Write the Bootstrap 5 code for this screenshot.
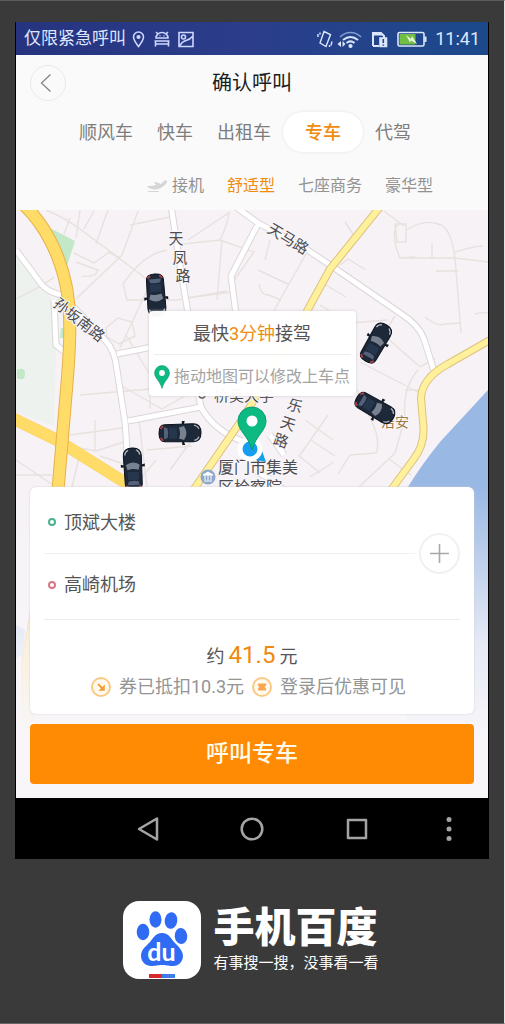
<!DOCTYPE html>
<html lang="zh-CN">
<head>
<meta charset="utf-8">
<meta name="viewport" content="width=device-width, initial-scale=1">
<title>确认呼叫</title>
<link href="https://cdn.jsdelivr.net/npm/bootstrap@5.3.0/dist/css/bootstrap.min.css" rel="stylesheet">
<style>
  body { font-family: Roboto, "Noto Sans CJK SC", sans-serif; background: #3a3a3a; color: #555; border-top: 1px solid #5c5c5c; border-right: 1px solid #e4e4e4; border-bottom: 1px solid #666; }
  button { border: 0; background: none; padding: 0; color: inherit; }
  svg { display: block; flex: none; }
  .phone { margin: 21px 16px 0; box-shadow: -1px 0 #000, 1px 0 #000; background: #fafafa; }
  .statusbar { height: 33px; padding: 0 8px; font-size: 17px; color: #dfe6ff; background: linear-gradient(90deg, #26347f, #2b3d8b 50%, #1b4a8b); }
  .statusbar time { font-size: 18px; }
  .titlebar { display: grid; grid-template-columns: 36px 1fr 36px; padding: 10px 14px 10px; }
  .titlebar h1 { font-size: 20px; color: #1c1c1c; }
  .round-btn { width: 36px; height: 36px; border: 1px solid #e9e9e9; border-radius: 50%; }
  .ride-tabs { padding: 1px 14px 0 0; color: #7d7d7d; font-size: 18px; }
  .ride-tabs button { height: 40px; padding: 0 12px; white-space: nowrap; }
  .ride-tabs .chosen { padding: 0 22px; border-radius: 20px; background: #fff; box-shadow: 0 0 3px #e2e2e2; font-weight: 500; }
  .chosen { color: #f08c10; }
  .class-tabs { gap: 23px; padding: 22px 55px 12px 0; font-size: 16px; line-height: 24px; color: #929292; }
  .map-area { padding: 101px 14px 14px; overflow: hidden; }
  .map-canvas { inset: 0; }
  .map-canvas text { font-family: "Noto Sans CJK SC", sans-serif; }
  .callout { width: 207px; padding: 0 5px; margin-bottom: 91px; background: rgba(255,255,255,.97); border-radius: 4px; box-shadow: 0 0 3px #ccc; }
  .callout p { height: 43px; padding-top: 2px; font-size: 18px; white-space: nowrap; }
  .callout p + p { height: 42px; font-size: 16px; border-top: 1px solid #eee; color: #a3a3a3; }
  .trip { background: #fff; border-radius: 6px; box-shadow: 0 0 2px #ccc; padding: 0 14px 12px; }
  .stops { border-bottom: 1px solid #eee; }
  .stops .stop { height: 66px; font-size: 18px; padding-left: 4px; gap: 8px; text-align: left; }
  .stops .stop:first-child { padding-top: 4px; }
  .stops .stop + .stop { border-top: 1px solid #f1f1f1; padding-bottom: 4px; }
  .dot { width: 8px; height: 8px; border: 2px solid #4cb28c; border-radius: 50%; }
  .dot-end { border-color: #d77884; }
  .add-btn { width: 41px; height: 41px; border: 2px solid #f1f1f1; border-radius: 50%; background: #fff; }
  .price { padding-top: 20px; font-size: 18px; line-height: 30px; }
  .amount { font-size: 24px; color: #ef8a0c; }
  .discount { font-size: 18px; line-height: 30px; color: #949494; gap: 8px; padding-right: 7px; white-space: nowrap; }
  .call-btn, .call-btn:hover { height: 60px; margin-top: 10px; font-size: 23px; font-weight: 500; color: #fffbe8; background: #ff8a04; border: 0; border-radius: 4px; }
  .keys { display: grid; grid-template-columns: 80px 1fr 1fr 1fr 79px; height: 61px; background: #000; }
  .keys button:first-child { grid-column: 2; }
  .brand { padding: 42px 2px 44px 0; gap: 12px; color: #fff; }
  .brand-name { font-size: 41px; line-height: 46px; font-weight: 900; }
  .brand-line { font-size: 15px; line-height: 24px; }
</style>
</head>
<body class="min-vh-100">
<main class="phone">
  <div class="statusbar d-flex align-items-center">
    <span>仅限紧急呼叫</span>
    <svg class="ms-1" width="68" height="20" viewBox="0 0 68 20" fill="none" stroke="#ccd6ff" stroke-width="1.6">
      <path d="M8.500 17.500C5.500 13.500 3.500 11 3.500 8a5 5 0 0 1 10 0c0 3-2 5.500-5 9.500z"/><circle cx="8.500" cy="8" r="1.300" fill="#ccd6ff"/>
      <path d="M26 9a6 5.500 0 0 1 12 0zM24.500 12h15M25.500 12v5.500M38.500 12v5.500M25.500 15h13M28 5l-2-2M36 5l2-2"/><path d="M29.500 6.800h1M33.500 6.800h1"/>
      <path d="M49 3.500h14v14H49zM50 16.500q2-4 6-5 4-1 6.500-4"/><circle cx="53.500" cy="8" r="2"/>
    </svg>
    <svg class="ms-auto me-2" width="112" height="20" viewBox="0 0 112 20" fill="none" stroke="#dce6fb" stroke-width="1.600">
      <path d="M9 2.500l6.500 3-4.500 12-6-3.500zM3 5v3M5 3.500v2M17 12.500l-1 4M14.500 16v2" stroke-width="1.400"/>
      <path d="M25 8c6-6 15-6 21 0" stroke="#7f9dce"/><path d="M28 11c5-4 10-4 15 0M31.500 14c2.500-2 5.500-2 8 0" stroke-width="2"/><circle cx="35.500" cy="17" r="1.300" fill="#dce6fb"/>
      <path d="M26 12l-3.500 3 3.500 3zM27.500 12l3 3-3 3z" fill="#dce6fb" stroke="none"/>
      <path d="M58 17V4h8l3 3v2M58 17h6M58 5.500h9" stroke-width="2"/><path d="M65 9h6.500v8.500H65z" fill="#dce6fb"/><path d="M68.300 10v4M68.300 15.500v1.200" stroke="#24458b"/>
      <path d="M84.500 3.500h23q1.500 0 1.500 1.500v10.500q0 1.500-1.500 1.500h-23q-1.500 0-1.500-1.500V5q0-1.500 1.500-1.500z"/><path d="M84.500 5h16v10.500h-16z" fill="#72bd43" stroke="none"/><path d="M91 6l5 4 1-3 5 8-6-3.500-1 2z" fill="#e6f5dd" stroke="none"/><path d="M110.500 7.500v5.500" stroke-width="2"/>
    </svg>
    <time>11:41</time>
  </div>

  <header>
    <div class="titlebar align-items-center">
      <button class="round-btn d-flex align-items-center justify-content-center" aria-label="返回"><svg class="me-1" width="12" height="20" viewBox="0 0 12 20" fill="none" stroke="#858585" stroke-width="1.300"><path d="M10.500 1.500L1.500 10l9 8.500"/></svg></button>
      <h1 class="m-0 text-center fw-normal">确认呼叫</h1>
    </div>
    <nav class="ride-tabs d-flex justify-content-center" aria-label="服务">
      <button>顺风车</button><button>快车</button><button>出租车</button><button class="chosen">专车</button><button>代驾</button>
    </nav>
    <nav class="class-tabs d-flex justify-content-end" aria-label="车型">
      <button class="d-flex align-items-center"><svg class="me-1" width="22" height="16" viewBox="0 0 22 16" fill="#d6d6d6"><path d="M1 8.500c2-1 3.500-.5 6-.8L10 7 8 4.500 10 4l5 2 3-3c1.500-1.300 3-1 3 .2 0 1.600-1.500 3.300-3.500 4.800-2 1.800-4.500 3.200-7.500 3.500-3 .2-6-.5-9-3z"/><path d="M2 13h11v1H2z"/></svg>接机</button>
      <button class="chosen">舒适型</button><button>七座商务</button><button>豪华型</button>
    </nav>
  </header>

  <section class="map-area position-relative">
    <svg class="map-canvas position-absolute w-100 h-100" viewBox="16 210 472 588" preserveAspectRatio="xMidYMin slice" role="img" aria-label="地图">
      <defs>
        <linearGradient id="fade" x1="0" y1="0" x2="0" y2="1"><stop offset="0" stop-color="#f8f6f9" stop-opacity="0"/><stop offset=".5" stop-color="#f8f6f9" stop-opacity=".8"/><stop offset=".8" stop-color="#f8f6f9"/></linearGradient>
        <g id="car">
          <path d="M-12-5l3 1v2l-3 0zM12-5l-3 1v2l3 0z" fill="#101720"/>
          <path d="M-9-13C-9-19-5-21 0-21S9-19 9-13L8.500 15C8.500 19 6 21 0 21S-8.500 19-8.500 15z" fill="#1d2838" stroke="#0c121b"/>
          <path d="M-7.500-14q0-3 3.500-5M7.500-14q0-3-3.500-5" stroke="#b5bec9" stroke-width="1.200" fill="none"/>
          <path d="M-7-4Q0-9 7-4L5.500 1Q0-1-5.500 1z" fill="#77818f"/>
          <path d="M-5.500 3h11v8h-11z" fill="#26364c"/><path d="M-5 12.500Q0 11 5 12.500L6 16H-6z" fill="#53627a"/>
          <path d="M-7.500 17l3 2.500M7.500 17l-3 2.500" stroke="#a64049" stroke-width="2"/>
        </g>
        <g id="pin"><path d="M0 0C-4-15-14-19-14-29a14 14 0 0 1 28 0C14-19 4-15 0 0z" fill="#0cba82" stroke="#0a9c70"/><circle cy="-29" r="5.500" fill="#fff"/></g>
      </defs>
      <path d="M16 210h472v588H16z" fill="#f6f2f6"/>
      <path d="M16 252l36 48 4 50-2 76-38-14z" fill="#edf2ef"/>
      <path d="M50 228l25 13-8 25zM53 290l11 8v12zM17 370q8-4 8 4t-8 4zM61 328h5v10h-6z" fill="#c3e8c7"/>
      <path d="M488 390l-48 52q-18 22-34 48v308h82z" fill="#9ab8e4"/>
      <path d="M16 625l9 5-2 25-7 3z" fill="#b7cdf2"/>
      <g fill="none" stroke="#e8e1de" stroke-width="1.400">
        <path d="M46 210q20 8 38 22l35 26 34 26M80 210l-4 28M94 211l-10 18M108 210q-8 22-12 34M138 211l-16 44-46 44M70 218l-6 16"/>
        <path d="M76 262l22 8q-2 8-16 6M74 253l20 10 14-10M108 252l12 6M130 225l40-8M167 250q-24 4-44 34l4 16h50l50-9M148 288l-28 60"/>
        <path d="M183 244l37-4 34 12-24 34M222 240l-5 60M187 298l44-6M220 240q8-16 9-28M188 240l42-28"/>
        <path d="M16 299q30-15 38-22M106 328l12-10 14 4 3 14-16 8-12-7zM80 395l70-6M120 385l42 24 42-24M150 389v20M126 335l24 40"/>
        <path d="M70 435l52-7M74 447l22 4 34-11M95 420v30M139 420l8 67M147 450l45-4M80 453l-8 34M100 456l30 10M156 460l-22 27M16 460l40 27M16 475h36M192 440l-22 30"/>
        <path d="M384 211l20 15M398 224q-8 10 2 34l15-1M395 224h11v18h-9zM406 230q20-12 35-5 11 6 14 34M400 258h55l33 4M455 258l6 75M455 252q20-6 28-6M432 243v15M436 271h22M425 317q12 10 20 7l16-1M475 314q8-2 13-1"/>
        <path d="M270 240l-5 20M306 254l-34 60M326 285l20 12M258 270l30 14M259 284q2 12 10 11l12 5M345 222l10 15M340 265l8-6 18 11M320 305l30 18 38-3M360 362l58 30M386 337l34 30q10-6 15-8M395 316l-14 22"/>
        <path d="M418 370q-16 18-13 48l-10 35-36 34M405 390h14M357 390l14 30q10 20 5 33l-26 2-12 19M328 415l-28 40M305 420l28 20M298 455l22 18M389 459l22 16M311 440l24 16M369 490l-12 28M310 477l24-15"/>
      </g>
      <g fill="none" stroke-linejoin="round">
        <path d="M16 250l26 35q8 8 20 10l43 45q10 10 12 30l8 52q2 20 3 68M54 300l2 45 15 12M117 354l35-7M128 421l73-14q14 26 47 36M201 407l-3-15M171 205l9 60 8 48M236 207l22 16 45 24 27 18 70 48q19 12 24 26l11 35M258 224l-27 52 5 38M256 471l14 8M284 455l-14-20M280 487l28 20" stroke="#dcd6d8" stroke-width="7"/>
        <path d="M16 250l26 35q8 8 20 10l43 45q10 10 12 30l8 52q2 20 3 68M54 300l2 45 15 12M117 354l35-7M128 421l73-14q14 26 47 36M201 407l-3-15M171 205l9 60 8 48M236 207l22 16 45 24 27 18 70 48q19 12 24 26l11 35M258 224l-27 52 5 38M256 471l14 8M284 455l-14-20M280 487l28 20" stroke="#fff" stroke-width="5"/>
        <path d="M380 207l-50 62-24 44-63 105-51 74M490 340l-42 24q-26 14-27 34l2 24q3 22-10 38l-25 34" stroke="#ddc27e" stroke-width="8"/>
        <path d="M380 207l-50 62-24 44-63 105-51 74M490 340l-42 24q-26 14-27 34l2 24q3 22-10 38l-25 34" stroke="#fff09b" stroke-width="6"/>
        <path d="M12 418l45 22 80 50" stroke="#f8cf62" stroke-width="12"/><path d="M12 418l45 22 80 50" stroke="#ffdb68" stroke-width="11"/>
        <path d="M24 205C46 226 60 256 66 285S70 350 66 395L58 490 28 660v80" stroke="#e6b04c" stroke-width="13"/><path d="M24 205C46 226 60 256 66 285S70 350 66 395L58 490 28 660v80" stroke="#ffdc67" stroke-width="11"/>
      </g>
      <g fill="#4c4c50" stroke="#f9f6f9" stroke-width="2" paint-order="stroke" font-size="15" text-anchor="middle">
        <text x="176" y="244">天</text><text x="180" y="263">凤</text><text x="183" y="281">路</text>
        <text transform="translate(79 320) rotate(38)" y="5">孙坂南路</text>
        <text transform="translate(288 239) rotate(31)" y="5">天马路</text>
        <text transform="translate(295 406) rotate(18)" y="5">乐</text><text transform="translate(288 424) rotate(18)" y="5">天</text><text transform="translate(281 441) rotate(18)" y="5">路</text>
        <text x="244" y="401">桥美大学</text><text x="395" y="427" fill="#a07a43" font-size="14">洁安</text>
        <text x="258" y="473" font-size="16">厦门市集美</text><text x="250" y="493" font-size="16">区检察院</text>
      </g>
      <circle cx="202" cy="395" r="3" fill="#fff" stroke="#555" stroke-width="1.500"/>
      <circle cx="208" cy="477" r="7.500" fill="#8ea8cb"/><path d="M203 475l5-3 5 3zM204 481h8M205 475v5M208 475v5M211 475v5" stroke="#fff" fill="#fff"/>
      <path d="M261 448l5 14-14-3z" fill="#159eea"/><circle cx="250" cy="449" r="10" fill="#169ff0" stroke="#fff" stroke-width="5"/>
      <use href="#pin" x="252" y="450"/>
      <use href="#car" transform="translate(156 295) rotate(176)"/><use href="#car" transform="translate(180 433) rotate(89)"/>
      <use href="#car" transform="translate(133 469) rotate(-3)"/><use href="#car" transform="translate(376 343) rotate(30)"/><use href="#car" transform="translate(375 408) rotate(120)"/>
      <path d="M16 487h472v311H16z" fill="url(#fade)"/>
    </svg>

    <div class="callout position-relative mx-auto">
      <p class="m-0 d-flex align-items-center justify-content-center">最快<span class="chosen">3分钟</span>接驾</p>
      <p class="m-0 d-flex align-items-center justify-content-center"><svg class="me-1" width="16" height="26" viewBox="-15 -44 30 45"><use href="#pin"/></svg><span>拖动地图可以修改上车点</span></p>
    </div>

    <div class="trip position-relative">
      <div class="stops d-flex align-items-center">
        <div class="flex-grow-1 me-1">
          <button class="stop w-100 d-flex align-items-center"><span class="dot"></span>顶斌大楼</button>
          <button class="stop w-100 d-flex align-items-center"><span class="dot dot-end"></span>高崎机场</button>
        </div>
        <button class="add-btn d-flex align-items-center justify-content-center" aria-label="添加"><svg width="19" height="19" viewBox="0 0 19 19"><path d="M9.500 0v19M0 9.500h19" stroke="#a9a9a9" stroke-width="1.600"/></svg></button>
      </div>
      <div class="price d-flex justify-content-center align-items-baseline gap-1">约<span class="amount">41.5</span>元</div>
      <div class="discount d-flex justify-content-center align-items-center">
        <svg width="20" height="20" viewBox="0 0 20 20"><circle cx="10" cy="10" r="9" fill="#fffaf0" stroke="#fbc983" stroke-width="2"/><path d="M7 7l5 5" stroke="#f59d32" stroke-width="2"/><path d="M13.800 7.500v6.300H7.500z" fill="#f59d32"/></svg>
        <span>券已抵扣10.3元</span>
        <svg width="20" height="20" viewBox="0 0 20 20"><circle cx="10" cy="10" r="9" fill="#fffaf0" stroke="#fbc983" stroke-width="2"/><path d="M6 7h8l-1.500 3 1.500 3H6l1.500-3z" fill="#f8a750" stroke="#f8a750"/></svg>
        <span>登录后优惠可见</span>
      </div>
    </div>
    <button class="call-btn btn w-100 position-relative">呼叫专车</button>
  </section>

  <nav class="keys" aria-label="系统导航">
    <button class="d-flex align-items-center justify-content-center" aria-label="后退"><svg width="24" height="26" viewBox="0 0 24 26"><path d="M21 2.500v21L3 13z" fill="none" stroke="#a4a4a4" stroke-width="2.500" stroke-linejoin="round"/></svg></button>
    <button class="d-flex align-items-center justify-content-center" aria-label="主页"><svg width="24" height="24" viewBox="0 0 24 24"><circle cx="12" cy="12" r="10.300" fill="none" stroke="#a4a4a4" stroke-width="2.500"/></svg></button>
    <button class="d-flex align-items-center justify-content-center" aria-label="最近任务"><svg width="22" height="22" viewBox="0 0 22 22"><path d="M2 2h18v18H2z" fill="none" stroke="#a4a4a4" stroke-width="2.500" stroke-linejoin="round"/></svg></button>
    <button class="d-flex align-items-center justify-content-center" aria-label="更多"><svg width="6" height="24" viewBox="0 0 6 24" fill="#a4a4a4"><circle cx="3" cy="2.500" r="2.500"/><circle cx="3" cy="12" r="2.500"/><circle cx="3" cy="21.500" r="2.500"/></svg></button>
  </nav>
</main>

<footer class="brand d-flex justify-content-center align-items-center">
  <svg width="78" height="78" viewBox="0 0 78 78" role="img" aria-label="百度">
    <rect width="78" height="78" rx="16" fill="#fff"/>
    <g fill="#2f6cf3"><ellipse cx="20" cy="31" rx="6.300" ry="8.300"/><ellipse cx="32.500" cy="18.500" rx="6" ry="8.300"/><ellipse cx="48" cy="19.500" rx="6.300" ry="8.300" transform="rotate(8 48 19.500)"/><ellipse cx="58" cy="35" rx="6.300" ry="8" transform="rotate(-5 58 35)"/>
    <path d="M39 32c7 0 9 6 13 10s8 8 8 13-4 10-10 10-7-1-11-1-6 1-11 1-10-4-10-10 4-9 8-13 6-10 13-10z"/></g>
    <text x="38.500" y="60" font-family="Lato, sans-serif" font-size="25" fill="#fff" text-anchor="middle" font-weight="700">du</text>
    <path d="M26 73h13v4H26z" fill="#d9292d"/><path d="M39 73h13v4H39z" fill="#3f7ee8"/>
  </svg>
  <div><div class="brand-name">手机百度</div><div class="brand-line">有事搜一搜&#xFF0C;没事看一看</div></div>
</footer>
<script src="https://cdn.jsdelivr.net/npm/bootstrap@5.3.0/dist/js/bootstrap.bundle.min.js"></script>
</body>
</html>
